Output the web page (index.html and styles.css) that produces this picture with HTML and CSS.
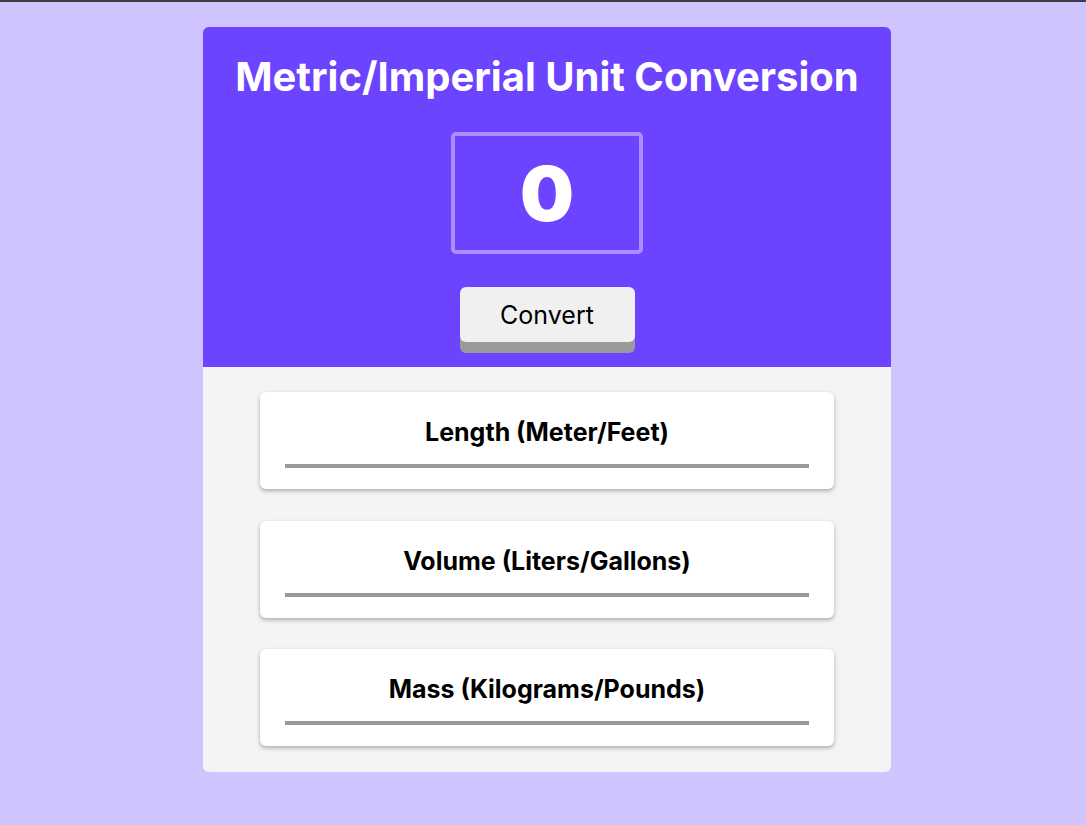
FILE: index.html
```html
<!DOCTYPE html>
<html>
<head>
<meta charset="utf-8">
<link rel="stylesheet" href="styles.css">
</head>
<body>
<div class="topline"></div>
<main class="card">
  <section class="hero">
    <h1 class="title">Metric/Imperial Unit Conversion</h1>
    <input class="num" type="text" value="0">
    <button class="convert">Convert</button>
  </section>
  <section class="results">
    <div class="result">
      <h2 class="label">Length (Meter/Feet)</h2>
      <div class="bar"></div>
    </div>
    <div class="result">
      <h2 class="label">Volume (Liters/Gallons)</h2>
      <div class="bar"></div>
    </div>
    <div class="result">
      <h2 class="label">Mass (Kilograms/Pounds)</h2>
      <div class="bar"></div>
    </div>
  </section>
</main>
</body>
</html>
```
FILE: styles.css
```css
* { box-sizing: border-box; }
html, body { margin: 0; padding: 0; }
body {
  background: #d0c4ff;
  font-family: Inter, "Noto Sans", sans-serif;
  min-height: 825px;
  padding-left: 8px;
}
.topline { height: 2px; background: #3d3b45; margin-left: -8px; }
.card {
  width: 688px;
  margin: 25px auto 0;
  border-radius: 6px;
  overflow: hidden;
}
.hero {
  background: #6c43ff;
  display: flex;
  flex-direction: column;
  align-items: center;
  padding: 26px 0 14px;
}
.title {
  margin: 0;
  color: #fff;
  font-size: 40px;
  line-height: 48px;
  font-weight: 700;
}
.num {
  margin-top: 31px;
  width: 192px;
  height: 122px;
  border: 4px solid #b08cff;
  border-radius: 5px;
  background: transparent;
  color: #fff;
  text-align: center;
  font-family: Inter, sans-serif;
  font-size: 76px;
  font-weight: 900;
  outline: none;
  padding: 0;
}
.convert {
  margin-top: 33px;
  margin-bottom: 11px;
  width: 175px;
  height: 55px;
  border: none;
  border-radius: 6px;
  background: #f0f0f0;
  box-shadow: 0 11px 0 #9a9a9a;
  font-family: Inter, sans-serif;
  font-size: 25px;
  color: #000;
  padding: 0;
}
.results {
  background: #f4f4f4;
  padding: 25px 57px 26px;
  display: flex;
  flex-direction: column;
  gap: 31.5px;
}
.result {
  background: #fff;
  border-radius: 6px;
  box-shadow: 0 2px 4px rgba(0,0,0,0.3);
  padding: 25px 25px 21px;
  height: 97px;
}
.label {
  margin: 0;
  text-align: center;
  font-size: 25px;
  line-height: 30px;
  font-weight: 700;
  color: #000;
}
.bar {
  margin-top: 17px;
  height: 4px;
  background: #9a9a9a;
}
```
